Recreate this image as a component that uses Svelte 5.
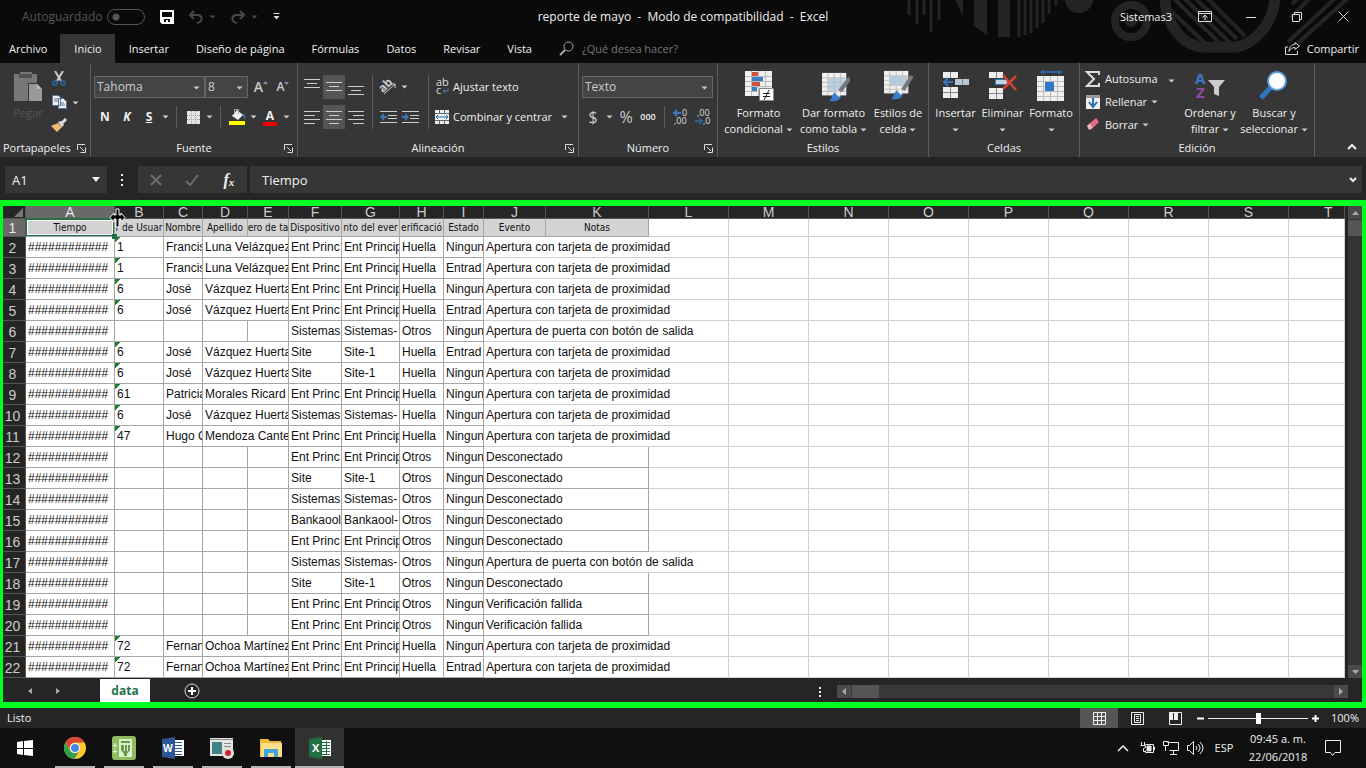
<script lang="ts">
  type Row = {
    user?: string;
    name?: string;
    surname?: string;
    device: string;
    point: string;
    check: string;
    state: string;
    event: string;
  };

  const tabs = ["Archivo", "Inicio", "Insertar", "Diseño de página", "Fórmulas", "Datos", "Revisar", "Vista"];
  const columns = [
    { id: "A", width: 89 },
    { id: "B", width: 49 },
    { id: "C", width: 39 },
    { id: "D", width: 45 },
    { id: "E", width: 41 },
    { id: "F", width: 53 },
    { id: "G", width: 58 },
    { id: "H", width: 44 },
    { id: "I", width: 40 },
    { id: "J", width: 62 },
    { id: "K", width: 103 },
    ...["L", "M", "N", "O", "P", "Q", "R", "S"].map((id) => ({ id, width: 80 })),
  ];
  const titles = [
    "Tiempo",
    "r de Usuar",
    "Nombre",
    "Apellido",
    "ero de ta",
    "Dispositivo",
    "nto del ever",
    "erificació",
    "Estado",
    "Evento",
    "Notas",
  ];

  const CARD = "Apertura con tarjeta de proximidad";
  const EXIT = "Apertura de puerta con botón de salida";
  const OFF = "Desconectado";
  const FAIL = "Verificación fallida";
  const ENT = ["Ent Princ", "Ent Princip"];
  const SIS = ["Sistemas", "Sistemas-"];
  const SITE = ["Site", "Site-1"];
  const BANK = ["Bankaool", "Bankaool-"];

  function person(user: string, name: string, surname: string, place: string[], state: string): Row {
    return { user, name, surname, device: place[0], point: place[1], check: "Huella", state, event: CARD };
  }

  function other(place: string[], event: string): Row {
    return { device: place[0], point: place[1], check: "Otros", state: "Ningun", event };
  }

  const rows: Row[] = [
    person("1", "Francis", "Luna Velázquez", ENT, "Ningun"),
    person("1", "Francis", "Luna Velázquez", ENT, "Entrad"),
    person("6", "José", "Vázquez Huerta", ENT, "Ningun"),
    person("6", "José", "Vázquez Huerta", ENT, "Entrad"),
    other(SIS, EXIT),
    person("6", "José", "Vázquez Huerta", SITE, "Entrad"),
    person("6", "José", "Vázquez Huerta", SITE, "Ningun"),
    person("61", "Patricia", "Morales Ricard", ENT, "Ningun"),
    person("6", "José", "Vázquez Huerta", SIS, "Ningun"),
    person("47", "Hugo C", "Mendoza Cante", ENT, "Ningun"),
    other(ENT, OFF),
    other(SITE, OFF),
    other(SIS, OFF),
    other(BANK, OFF),
    other(ENT, OFF),
    other(SIS, EXIT),
    other(SITE, OFF),
    other(ENT, FAIL),
    other(ENT, FAIL),
    person("72", "Fernan", "Ochoa Martínez", ENT, "Ningun"),
    person("72", "Fernan", "Ochoa Martínez", ENT, "Entrad"),
  ];

  let activeTab = $state("Inicio");
  let formula = $state("Tiempo");
  let zoom = $state(100);
</script>

{#snippet caret()}
  <svg class="caret" width="7" height="4" viewBox="0 0 7 4"><path d="M0.5 0.5h6L3.5 3.5z" fill="currentColor" /></svg>
{/snippet}

{#snippet launcher(label: string)}
  <button class="launcher" aria-label={label}>
    <svg width="9" height="9" viewBox="0 0 9 9" fill="none" stroke="#ddd"><path d="M0.5 6V0.5H8M3 3l4 4M8.5 3.5v5h-5" /></svg>
  </button>
{/snippet}

{#snippet lines(y: number, widths: number[])}
  <svg width="16" height="18" viewBox="0 0 16 18" fill="none" stroke="#ccc">
    {#each widths as w, i}
      <path d={`M${w < 0 ? 16 + w : w === 10 ? 3 : 0} ${y + i * 4}.5h${Math.abs(w)}`} />
    {/each}
  </svg>
{/snippet}

{#snippet grid()}
  <path fill="#f2f0ee" d="M0 1h27v25H0z" />
  <path stroke="#bbb" fill="none" d="M0 6.5h27M0 11.5h27M0 16.5h27M0 21.5h27M6.5 1v25M13.5 1v25M20.5 1v25" />
{/snippet}

<div class="excel">
  <header class="top">
    <svg class="art" width="486" height="62" viewBox="0 0 486 62" fill="none" stroke="#242424">
      <path stroke-width="3" d="M29 0v15M37 0v24M44 0v15M51 0v32M59 0v20" />
      <path fill="#242424" stroke="none" d="M75 0h8v16zM94 0h13v35l-13-9zM118 0h12v37h-12z" />
      <path stroke-width="3" d="M139 0v37M145 0v35M151 0v33M157 0v28M163 0v23M169 0v14M176 0v5" />
      <circle cx="199" cy="-1" r="14" fill="#242424" stroke="none" />
      <circle cx="251" cy="21" r="16" stroke-width="8" />
      <circle cx="251" cy="21" r="6" fill="#242424" stroke="none" />
      <path stroke-width="11" d="M285 -10C283 27 305 47 325 47h32c20-5 42-28 37-60" />
      <path stroke-width="4" d="M292 -3l50 48M303 -3l48 47M314 -3l43 42M325 -4l40 40M288 8l40 38" />
      <path stroke-width="4" d="M412 4l10-10M410 18l26-26M408 42l54-50M418 43l58-52" />
    </svg>
    <div class="title-bar">
      <div class="quick">
        <label class="autosave">Autoguardado <input type="checkbox" disabled /></label>
        <button aria-label="Guardar">
          <svg width="14" height="14" viewBox="0 0 14 14"><path fill="#fff" fill-rule="evenodd" d="M0 0h14v14H2l-2-2zM2 2v5h10V2zM4 9v3h2v-2h2v2h2V9z" /></svg>
        </button>
        <button class="dim" aria-label="Deshacer">
          <svg width="14" height="14" viewBox="0 0 14 14" fill="none" stroke="currentColor" stroke-width="2"><path d="M5 1L1 5l4 4M1 5h8c5 1 5 7-1 8" /></svg>
          {@render caret()}
        </button>
        <button class="dim" aria-label="Rehacer">
          <svg width="14" height="14" viewBox="0 0 14 14" fill="none" stroke="currentColor" stroke-width="2"><path d="M9 1l4 4-4 4M13 5H5c-5 1-5 7 1 8" /></svg>
          {@render caret()}
        </button>
        <button aria-label="Personalizar barra">
          <svg width="7" height="7" viewBox="0 0 7 7" fill="#ddd"><path d="M0.5 0h6v1h-6zM0.5 3h6L3.5 6.5z" /></svg>
        </button>
      </div>
      <div class="doc-title">reporte de mayo&nbsp; -&nbsp; Modo de compatibilidad&nbsp; -&nbsp; Excel</div>
      <div class="window-buttons">
        <span class="account">Sistemas3</span>
        <button aria-label="Opciones de la cinta">
          <svg width="14" height="11" viewBox="0 0 14 11" fill="none" stroke="#ddd"><path d="M0.5 0.5h13v10H0.5zM0.5 2.5h13M7 9V4M4.5 6.5L7 4l2.5 2.5" /></svg>
        </button>
        <button aria-label="Minimizar"><svg width="10" height="10" viewBox="0 0 10 10" stroke="#ddd"><path d="M0 5.5h10" /></svg></button>
        <button aria-label="Restaurar">
          <svg width="10" height="10" viewBox="0 0 10 10" fill="none" stroke="#ddd"><path d="M0.5 2.5h7v7h-7zM2.5 2.5v-2h7v7h-2" /></svg>
        </button>
        <button aria-label="Cerrar"><svg width="11" height="11" viewBox="0 0 11 11" stroke="#ddd"><path d="M0.5 0.5l10 10M10.5 0.5l-10 10" /></svg></button>
      </div>
    </div>
    <nav class="tabs">
      {#each tabs as tab}
        <button class:active={tab === activeTab} onclick={() => (activeTab = tab)}>{tab}</button>
      {/each}
      <label class="tell-me">
        <svg width="15" height="15" viewBox="0 0 15 15" fill="none" stroke="#aaa"><circle cx="9.5" cy="5.5" r="4.5" /><path stroke-width="2" d="M6 9l-5 5" /></svg>
        <input type="text" placeholder="¿Qué desea hacer?" />
      </label>
      <button class="share">
        <svg width="15" height="13" viewBox="0 0 15 13" fill="none" stroke="#ddd"><path d="M3 5H0.5v7.5h12V9M10 0.5L14.5 4 10 7.5v-2C7 5.5 5 7 4 9.5 4 5 6.5 2.5 10 2.5z" /></svg>
        Compartir
      </button>
    </nav>
  </header>

  <div class="ribbon">
    <section class="clipboard">
      <div class="body">
        <button class="big disabled" disabled>
          <svg width="30" height="32" viewBox="0 0 30 32"><path fill="#777" d="M1 4h6V2h12v2h5v9h-9v18H1z" /><path fill="#505050" d="M6 4h13v4H6z" /><path fill="#999" d="M16 14h8l5 5v12H16z" /><path fill="#bbb" d="M24 14v5h5z" /></svg>
          <span>Pegar</span>
        </button>
        <div class="column">
          <button class="icon" aria-label="Cortar">
            <svg width="14" height="16" viewBox="0 0 14 16" fill="none" stroke-width="2"><path stroke="#ccc" d="M3 0l6 10M11 0L5 10" /><g stroke="#2f5e8c"><circle cx="3" cy="12" r="2" /><circle cx="11" cy="12" r="2" /></g></svg>
          </button>
          <button class="icon" aria-label="Copiar">
            <svg width="15" height="14" viewBox="0 0 15 14" stroke="#55789c"><path fill="#eee" d="M0.5 0.5h6l2 2v8h-8zM6.5 3.5h5l3 3v7h-8z" /><path d="M2 4h4M2 6h4M8 8h4M8 10h5" /></svg>
          </button>
          <button class="icon" aria-label="Copiar formato">
            <svg width="16" height="14" viewBox="0 0 16 14"><path fill="#f0bb75" d="M0 8l7-3 4 4-5 5z" /><path fill="#ddd" d="M7 4l4 5 2-2-3-4z" /><path stroke="#ddd" stroke-width="3" d="M11 5l4-4" /></svg>
          </button>
        </div>
        <button class="drop" aria-label="Opciones de copiar">{@render caret()}</button>
      </div>
      <h2>Portapapeles {@render launcher("Portapapeles")}</h2>
    </section>

    <section class="font">
      <div class="body rows">
        <div class="row">
          <div class="select wide"><select aria-label="Fuente"><option>Tahoma</option></select>{@render caret()}</div>
          <div class="select small"><select aria-label="Tamaño"><option>8</option></select>{@render caret()}</div>
          <button class="icon letter" aria-label="Aumentar tamaño">A<svg width="5" height="14" viewBox="0 0 5 14" fill="#6f93b8"><path d="M0 4l2.5-3L5 4z" /></svg></button>
          <button class="icon letter less" aria-label="Disminuir tamaño">A<svg width="5" height="14" viewBox="0 0 5 14" fill="#6f93b8"><path d="M0 2h5L2.5 5z" /></svg></button>
        </div>
        <div class="row">
          <button class="icon mark"><b>N</b></button>
          <button class="icon mark"><b><i>K</i></b></button>
          <button class="icon mark"><b><u>S</u></b></button>
          <button class="drop" aria-label="Subrayado">{@render caret()}</button>
          <span class="sep"></span>
          <button class="icon" aria-label="Bordes">
            <svg width="13" height="13" viewBox="0 0 13 13"><path fill="#e4e4e4" d="M0 0h13v13H0z" /><path stroke="#999" stroke-dasharray="1 1" d="M4.500 0v13M8.500 0v13M0 4.500h13M0 8.500h13" /></svg>
          </button>
          <button class="drop" aria-label="Más bordes">{@render caret()}</button>
          <span class="sep"></span>
          <button class="icon" aria-label="Color de relleno">
            <svg width="17" height="16" viewBox="0 0 17 16"><path fill="#eee" d="M8 1l6 5-5 5-6-4z" /><path stroke="#aaa" fill="none" d="M5.5 5V0.5h4V5" /><path fill="#3d78bd" d="M13 4c3 1 4 4 3 6l-2-3z" /><path fill="#ff0" d="M0 12h16v4H0z" /></svg>
          </button>
          <button class="drop" aria-label="Más rellenos">{@render caret()}</button>
          <button class="icon color" aria-label="Color de fuente"><b>A</b></button>
          <button class="drop" aria-label="Más colores">{@render caret()}</button>
        </div>
      </div>
      <h2>Fuente {@render launcher("Fuente")}</h2>
    </section>

    <section class="align">
      <div class="body">
        <div class="rows">
          <div class="row">
            <button class="icon" aria-label="Alinear arriba">{@render lines(1, [16, 10, 16])}</button>
            <button class="icon on" aria-label="Alinear al medio">{@render lines(4, [16, 10, 16])}</button>
            <button class="icon" aria-label="Alinear abajo">{@render lines(8, [16, 10, 16])}</button>
          </div>
          <div class="row">
            <button class="icon" aria-label="Izquierda">{@render lines(3, [16, 11, 16, 11])}</button>
            <button class="icon on" aria-label="Centrar">{@render lines(3, [16, 10, 16, 10])}</button>
            <button class="icon" aria-label="Derecha">{@render lines(3, [16, -11, 16, -11])}</button>
          </div>
        </div>
        <span class="sep tall"></span>
        <div class="rows second">
          <div class="row">
            <button class="icon" aria-label="Orientación">
              <svg width="18" height="16" viewBox="0 0 18 16"><text x="0" y="11" font-size="12" font-weight="bold" fill="#ccc" transform="rotate(-45 6 8)">ab</text><path stroke="#ccc" fill="none" d="M5 15L16 5M12 5h4v4" /></svg>
            </button>
            <button class="drop" aria-label="Más orientaciones">{@render caret()}</button>
          </div>
          <div class="row">
            <button class="icon" aria-label="Disminuir sangría">
              <svg width="17" height="14" viewBox="0 0 17 14"><path stroke="#ccc" d="M0 1.5h17M8 5.5h9M8 8.5h9M0 12.5h17" /><path fill="#3c78b4" d="M0 7l4-4v3h3v2H4v3z" /></svg>
            </button>
            <button class="icon" aria-label="Aumentar sangría">
              <svg width="17" height="14" viewBox="0 0 17 14"><path stroke="#ccc" d="M0 1.5h17M8 5.5h9M8 8.5h9M0 12.5h17" /><path fill="#3c78b4" d="M7 7L3 3v3H0v2h3v3z" /></svg>
            </button>
          </div>
        </div>
        <span class="sep tall"></span>
        <div class="rows">
          <div class="row">
            <button class="text">
              <svg width="14" height="18" viewBox="0 0 14 18" fill="#ddd" font-size="11"><text x="1" y="8">ab</text><text x="1" y="16">c</text><path fill="none" stroke="#4a7dac" d="M13 10v3H8M10 11l-2 2 2 2" /></svg>
              Ajustar texto
            </button>
          </div>
          <div class="row">
            <button class="text">
              <svg width="14" height="14" viewBox="0 0 14 14"><path fill="#eaf0f6" d="M0 0h14v14H0z" /><path stroke="#666" d="M0 3.5h14M0 10.5h14M4.5 0v3M9.5 0v3M4.5 11v3M9.5 11v3" /><path stroke="#2e6da8" fill="none" d="M1 7h12M3 5L1 7l2 2M11 5l2 2-2 2" /></svg>
              Combinar y centrar
            </button>
            <button class="drop after" aria-label="Más combinaciones">{@render caret()}</button>
          </div>
        </div>
      </div>
      <h2>Alineación {@render launcher("Alineación")}</h2>
    </section>

    <section class="number">
      <div class="body rows">
        <div class="row">
          <div class="select full"><select aria-label="Formato de número"><option>Texto</option></select>{@render caret()}</div>
        </div>
        <div class="row">
          <button class="icon sign">$</button>
          <button class="drop" aria-label="Más monedas">{@render caret()}</button>
          <button class="icon sign">%</button>
          <button class="icon zeros">000</button>
          <span class="sep"></span>
          <button class="icon" aria-label="Aumentar decimales">
            <svg width="16" height="16" viewBox="0 0 16 16" fill="#ddd" font-size="9"><text x="9" y="7">0</text><text x="1" y="15">,00</text><path stroke="#3c78b4" stroke-width="2" fill="none" d="M8 4H1M4 1L1 4l3 3" /></svg>
          </button>
          <button class="icon" aria-label="Disminuir decimales">
            <svg width="16" height="16" viewBox="0 0 16 16" fill="#ddd" font-size="9"><text x="2" y="7">,00</text><text x="8" y="15">,0</text><path stroke="#2d5f8f" stroke-width="2" fill="none" d="M0 12h7M4 9l3 3-3 3" /></svg>
          </button>
        </div>
      </div>
      <h2>Número {@render launcher("Número")}</h2>
    </section>

    <section class="styles">
      <div class="body">
        <button class="big w74">
          <svg width="32" height="32" viewBox="0 0 32 32"><g transform="translate(2 0)">{@render grid()}</g><path fill="#d2513a" d="M9 2h6v4H9zM9 12h8v4H9z" /><path fill="#3a7ec2" d="M9 7h11v4H9zM9 17h5v4H9z" /><path fill="#fff" stroke="#888" d="M16.5 18.5h14v12h-14z" /><path stroke="#222" d="M20 23.5h7M20 26.5h7M26 20l-5 10" /></svg>
          <span>Formato<br />condicional {@render caret()}</span>
        </button>
        <button class="big w74">
          <svg width="32" height="32" viewBox="0 0 32 32"><g transform="translate(4 2) scale(0.9)">{@render grid()}</g><path fill="#a9c3d8" d="M10 8h17v14H10z" opacity="0.7" /><path stroke="#777" stroke-width="4" d="M32 8L22 21" /><path fill="#3b7ccb" d="M11 31c3-1 2-7 7-9l5 4c-1 5-7 6-12 5z" /><path fill="#eee" d="M17 23l3-2 3 3-2 3z" /></svg>
          <span>Dar formato<br />como tabla {@render caret()}</span>
        </button>
        <button class="big w52">
          <svg width="32" height="32" viewBox="0 0 32 32"><g transform="translate(2 0) scale(0.9)">{@render grid()}</g><path fill="#b5cbdc" d="M8 6h17v10H8z" /><path stroke="#777" stroke-width="4" d="M30 6L21 20" /><path fill="#3b7ccb" d="M9 29c3-1 2-7 7-9l5 4c-1 5-7 6-12 5z" /><path fill="#eee" d="M15 21l3-2 3 3-2 3z" /></svg>
          <span>Estilos de<br />celda {@render caret()}</span>
        </button>
      </div>
      <h2>Estilos</h2>
    </section>

    <section class="cells">
      <div class="body">
        <button class="big w46">
          <svg width="28" height="32" viewBox="0 0 28 32"><path fill="#eee" d="M1 2h15v6H1zM1 17h15v11H1z" /><path fill="#b9c8d6" d="M13 9h14v6H13z" /><path stroke="#888" fill="none" d="M8.5 2v6M1 22.5h15M8.5 17v11M20.5 9v6" /><path stroke="#3577b8" stroke-width="2" fill="none" d="M11 12H2M6 8l-4 4 4 4" /></svg>
          <span>Insertar<br />{@render caret()}</span>
        </button>
        <button class="big w46">
          <svg width="30" height="32" viewBox="0 0 30 32"><path fill="#eee" d="M1 2h14v6H1zM1 18h14v11H1z" /><path fill="#c5d3df" stroke="#3577b8" d="M7.5 9.5h12v5h-12z" /><path stroke="#888" fill="none" d="M8.5 2v6M1 23.5h14M8.5 18v11" /><path stroke="#d1452d" stroke-width="2.5" d="M15 5l13 15M28 6L15 19" /></svg>
          <span>Eliminar<br />{@render caret()}</span>
        </button>
        <button class="big w50">
          <svg width="28" height="32" viewBox="0 0 28 32"><g transform="translate(0 5)">{@render grid()}</g><path fill="#2c7ac7" d="M8 12h9v9H8z" /><path stroke="#2f6296" fill="none" stroke-width="2" d="M4 2h20M7 0L4 2l3 2M21 0l3 2-3 2" /></svg>
          <span>Formato<br />{@render caret()}</span>
        </button>
      </div>
      <h2>Celdas</h2>
    </section>

    <section class="edit">
      <div class="body">
        <div class="column labels">
          <button class="text">
            <svg width="16" height="16" viewBox="0 0 16 16" fill="none" stroke="#ddd" stroke-width="2"><path d="M14 4V1H2l7 7-7 7h12v-3" /></svg>
            Autosuma <span class="far">{@render caret()}</span>
          </button>
          <button class="text">
            <svg width="16" height="14" viewBox="0 0 16 14"><path fill="#eee" d="M1 0h14v14H1z" /><path fill="#999" d="M1 0h14v3H1z" /><path stroke="#2e6da8" stroke-width="2" fill="none" d="M8 3v9M4 7l4 5 4-5" /></svg>
            Rellenar {@render caret()}
          </button>
          <button class="text">
            <svg width="16" height="14" viewBox="0 0 16 14"><path fill="#e46a83" d="M5 5l6-5 3 4-6 6z" /><path fill="#f3b4c1" d="M5 5l3 5-4 2-2-4z" /></svg>
            Borrar {@render caret()}
          </button>
        </div>
        <button class="big w60">
          <svg width="30" height="32" viewBox="0 0 30 32"><g font-size="15" font-weight="bold"><text x="0" y="14" fill="#3c78c8">A</text><text x="1" y="28" fill="#8e4ba8">Z</text></g><path fill="#ccc" d="M13 10h17l-6 7v9l-5-2v-7z" /></svg>
          <span>Ordenar y<br />filtrar {@render caret()}</span>
        </button>
        <button class="big w68">
          <svg width="30" height="32" viewBox="0 0 30 32"><path stroke="#2f74c0" stroke-width="5" d="M11 18L2 28" /><circle cx="18" cy="11" r="9" fill="#fff" stroke="#5c9bd8" stroke-width="2" /></svg>
          <span>Buscar y<br />seleccionar {@render caret()}</span>
        </button>
      </div>
      <h2>Edición</h2>
    </section>
    <button class="collapse" aria-label="Contraer la cinta">
      <svg width="10" height="6" viewBox="0 0 10 6" fill="none" stroke="#eee" stroke-width="2"><path d="M1 5l4-4 4 4" /></svg>
    </button>
  </div>

  <div class="formula-bar">
    <div class="name-box">
      <input type="text" aria-label="Cuadro de nombres" value="A1" />
      <svg width="8" height="5" viewBox="0 0 8 5" fill="#eee"><path d="M0 0h8L4 5z" /></svg>
    </div>
    <svg class="dots" width="3" height="12" viewBox="0 0 3 12" fill="#eee"><path d="M0 0h2v2H0zM0 5h2v2H0zM0 10h2v2H0z" /></svg>
    <div class="formula-buttons">
      <button aria-label="Cancelar"><svg width="12" height="12" viewBox="0 0 12 12" stroke="#6e6e6e" stroke-width="2"><path d="M1 1l10 10M11 1L1 11" /></svg></button>
      <button aria-label="Introducir"><svg width="14" height="12" viewBox="0 0 14 12" fill="none" stroke="#6e6e6e" stroke-width="2"><path d="M1 7l4 4 8-10" /></svg></button>
      <button class="fx">f<small>x</small></button>
    </div>
    <div class="formula">
      <input type="text" aria-label="Barra de fórmulas" bind:value={formula} />
      <svg width="8" height="6" viewBox="0 0 8 6" fill="none" stroke="#eee" stroke-width="2"><path d="M1 1l3 3 3-3" /></svg>
    </div>
  </div>

  <main class="sheet-frame">
    <div class="sheet">
      <table>
        <colgroup>
          <col style:width="23px" />
          {#each columns as column}
            <col style:width={`${column.width}px`} />
          {/each}
          <col />
        </colgroup>
        <thead>
          <tr>
            <th class="corner"><svg width="9" height="9" viewBox="0 0 9 9"><path fill="#777" d="M9 0v9H0z" /></svg></th>
            {#each columns as column}
              <th class:selected={column.id === "A"}>{column.id}</th>
            {/each}
            <th class="last">T</th>
          </tr>
        </thead>
        <tbody>
          <tr class="titles">
            <th class="selected">1</th>
            {#each titles as title, i}
              <td class:active-cell={i === 0}><span>{title}</span></td>
            {/each}
            {#each { length: 9 } as _}
              <td class="free"></td>
            {/each}
          </tr>
          {#each rows as row, i}
            <tr>
              <th>{i + 2}</th>
              <td>############</td>
              <td class:flag={row.user}>{row.user ?? ""}</td>
              <td>{row.name ?? ""}</td>
              {#if row.surname}
                <td colspan="2">{row.surname}</td>
              {:else}
                <td></td>
                <td></td>
              {/if}
              <td>{row.device}</td>
              <td>{row.point}</td>
              <td>{row.check}</td>
              <td>{row.state}</td>
              {#if row.event.startsWith("Apertura")}
                <td colspan="3" class="spill">{row.event}</td>
              {:else}
                <td colspan="2">{row.event}</td>
                <td class="free"></td>
              {/if}
              {#each { length: 8 } as _}
                <td class="free"></td>
              {/each}
            </tr>
          {/each}
        </tbody>
      </table>
      <div class="v-scroll">
        <button aria-label="Subir"><svg width="7" height="4" viewBox="0 0 7 4" fill="#aaa"><path d="M0 4h7L3.5 0z" /></svg></button>
        <span class="thumb"></span>
        <button aria-label="Bajar"><svg width="7" height="4" viewBox="0 0 7 4" fill="#aaa"><path d="M0 0h7L3.5 4z" /></svg></button>
      </div>
      <span class="fill-handle"></span>
      <svg class="pointer" width="17" height="20" viewBox="0 0 17 20"><path fill="#000" stroke="#fff" d="M7 1h3v6h2V5l4 4.5-4 4.5v-3h-2v8H7v-8H5v3L1 9.5 5 5v2h2z" /></svg>
    </div>
    <div class="sheet-tabs">
      <button class="arrow" aria-label="Hoja anterior"><svg width="4" height="6" viewBox="0 0 4 6" fill="#aaa"><path d="M4 0v6L0 3z" /></svg></button>
      <button class="arrow" aria-label="Hoja siguiente"><svg width="4" height="6" viewBox="0 0 4 6" fill="#aaa"><path d="M0 0v6l4-3z" /></svg></button>
      <button class="sheet-tab">data</button>
      <button class="add" aria-label="Hoja nueva"><svg width="16" height="16" viewBox="0 0 16 16" fill="none" stroke="#ddd"><circle cx="8" cy="8" r="7" /><path stroke="#fff" stroke-width="2" d="M8 4v8M4 8h8" /></svg></button>
      <svg class="dots" width="3" height="12" viewBox="0 0 3 12" fill="#eee"><path d="M0 1h2v2H0zM0 5h2v2H0zM0 9h2v2H0z" /></svg>
      <div class="h-scroll">
        <button aria-label="Izquierda"><svg width="4" height="7" viewBox="0 0 4 7" fill="#aaa"><path d="M4 0v7L0 3.5z" /></svg></button>
        <span class="thumb"></span>
        <button aria-label="Derecha"><svg width="4" height="7" viewBox="0 0 4 7" fill="#aaa"><path d="M0 0v7l4-3.5z" /></svg></button>
      </div>
    </div>
  </main>

  <footer class="status">
    <span class="ready">Listo</span>
    <button class="view on" aria-label="Normal"><svg width="13" height="13" viewBox="0 0 13 13" fill="none" stroke="#eee"><path d="M0.5 0.5h12v12h-12zM4.5 0v13M8.5 0v13M0 4.5h13M0 8.5h13" /></svg></button>
    <button class="view" aria-label="Diseño de página"><svg width="13" height="13" viewBox="0 0 13 13" fill="none" stroke="#eee"><path d="M0.5 0.5h12v12h-12zM3.5 2.5h6v8h-6zM5 4.5h3M5 6.5h3M5 8.5h3" /></svg></button>
    <button class="view" aria-label="Saltos de página"><svg width="13" height="13" viewBox="0 0 13 13"><path fill="none" stroke="#eee" d="M0.5 0.5h12v12h-12z" /><path fill="#eee" d="M0 0h4v8H0zM5 0h4v8H5z" /></svg></button>
    <button class="step" aria-label="Alejar"><svg width="7" height="7" viewBox="0 0 7 7" stroke="#fff" stroke-width="2"><path d="M0 3.5h7" /></svg></button>
    <input type="range" min="0" max="200" aria-label="Zoom" bind:value={zoom} />
    <button class="step" aria-label="Acercar"><svg width="7" height="7" viewBox="0 0 7 7" stroke="#fff" stroke-width="2"><path d="M0 3.5h7M3.5 0v7" /></svg></button>
    <span class="percent">{zoom}%</span>
  </footer>

  <div class="taskbar">
    <button class="start" aria-label="Inicio">
      <svg width="16" height="16" viewBox="0 0 16 16" fill="#fff"><path d="M0 2l6-1v7H0zM7 1l9-1v8H7zM0 9h6v6l-6-1zM7 9h9v7l-9-1z" /></svg>
    </button>
    <button class="app" aria-label="Chrome">
      <svg width="22" height="22" viewBox="0 0 22 22"><circle cx="11" cy="11" r="11" fill="#fbc92e" /><path fill="#df4534" d="M1.5 5.5A11 11 0 0 1 20.5 5.5H11a5.5 5.5 0 0 0-5 7.5z" /><path fill="#2f9e50" d="M1.5 5.5A11 11 0 0 0 10.5 22l5-8.5a5.5 5.5 0 0 1-9.5 0z" /><circle cx="11" cy="11" r="5" fill="#fff" /><circle cx="11" cy="11" r="4" fill="#4688ef" /></svg>
    </button>
    <button class="app" aria-label="Control de acceso">
      <svg width="24" height="24" viewBox="0 0 24 24"><rect width="24" height="24" rx="3" fill="#8cbb62" /><path fill="#dfeecd" d="M7 3h13v18H7z" /><path fill="#6a9a45" d="M9 5h9v2H9zM9 9h9v5l-3 4v2h-3v-2l-3-4z" /><path fill="#dfeecd" d="M12 9h1v6h-1zM15 9h1v6h-1z" /><path stroke="#e8f3db" d="M1 9.5h4M3 7v5M1 15.5h4M3 13v5" /></svg>
    </button>
    <button class="app" aria-label="Word">
      <svg width="22" height="22" viewBox="0 0 22 22"><path fill="#fff" d="M12 3h10v16H12z" /><path stroke="#2b5797" d="M13 5.5h7M13 8.5h7M13 11.5h7M13 14.5h7M13 17.5h7" /><path fill="#2b5797" d="M0 2l13-2v22L0 20z" /><text x="1" y="15" font-size="10" font-weight="bold" fill="#fff">W</text></svg>
    </button>
    <button class="app" aria-label="Grabador">
      <svg width="24" height="22" viewBox="0 0 24 22"><path fill="#e5e5e5" d="M0 1h23v18H0z" /><path fill="#3f8287" d="M2 5h10v12H2z" /><path stroke="#888" d="M0 2.5h23M14 6.5h7M14 9.5h7M14 12.5h4" /><circle cx="18" cy="16" r="6" fill="#ddd" /><circle cx="18" cy="16" r="3" fill="#d31f2a" /></svg>
    </button>
    <button class="app" aria-label="Explorador">
      <svg width="22" height="20" viewBox="0 0 22 20"><path fill="#eeb73e" d="M0 1h8l2 2h11v16H0z" /><path fill="#fbdf88" d="M1 5h21v14H1z" /><path fill="#3fa5dc" d="M4 11h14v8h-4v-4H8v4H4z" /></svg>
    </button>
    <button class="app current" aria-label="Excel">
      <svg width="22" height="22" viewBox="0 0 22 22"><path fill="#fff" d="M12 3h10v16H12z" /><path stroke="#1f7145" d="M13 5.5h8M13 8.5h8M13 11.5h8M13 14.5h8M13 17.5h8M17.5 4v14" /><path fill="#1f7145" d="M0 2l13-2v22L0 20z" /><text x="3" y="15" font-size="11" font-weight="bold" fill="#fff">X</text></svg>
    </button>
    <div class="tray">
      <button aria-label="Mostrar iconos"><svg width="12" height="8" viewBox="0 0 12 8" fill="none" stroke="#eee" stroke-width="1.5"><path d="M1 7l5-5 5 5" /></svg></button>
      <button aria-label="Batería"><svg width="15" height="12" viewBox="0 0 15 12" fill="none" stroke="#eee"><path d="M5.5 2.5h8v8h-8v-2M13.5 5h1v3M1.5 0v3M4.5 0v3M0.5 3.5h5v2l-2 1v3h2" /><path fill="#eee" d="M7 4h4v5H7z" /></svg></button>
      <button aria-label="Red"><svg width="16" height="14" viewBox="0 0 16 14" fill="none" stroke="#eee"><path d="M4.5 1.5h11v8h-9M10.5 10v3M7 13.5h7M0.5 0.5h5v4h-5zM2.5 5v5" /></svg></button>
      <button aria-label="Volumen"><svg width="17" height="14" viewBox="0 0 17 14" fill="none" stroke="#eee"><path d="M0.5 4.5h2l4-4v13l-4-4h-2zM9 5q2 2 0 4M11 3q4 4 0 8M13 1q6 6 0 12" /></svg></button>
      <button class="lang">ESP</button>
      <time datetime="2018-06-22T09:45">09:45 a. m.<br />22/06/2018</time>
      <button class="notes" aria-label="Notificaciones"><svg width="16" height="17" viewBox="0 0 16 17" fill="none" stroke="#eee"><path d="M0.5 0.5h15v12H10l-2.5 3-2-3h-5z" /></svg></button>
    </div>
  </div>
</div>

<style>
  :global(body) {
    margin: 0;
    background: #111;
  }

  .excel {
    font: 12px/16px "Open Sans", "Noto Sans", sans-serif;
    color: #f0f0f0;
    background: #252525;
  }

  button,
  input,
  select {
    font: inherit;
    color: inherit;
    background: none;
    border: 0;
    padding: 0;
    margin: 0;
    outline: none;
  }

  button {
    display: flex;
    align-items: center;
    justify-content: center;
    white-space: nowrap;
  }

  svg {
    flex: none;
  }

  .caret {
    color: #ccc;
  }

  /* title bar and tabs */
  .top {
    position: relative;
    background: #0a0a0a;
  }

  .art {
    position: absolute;
    top: 0;
    right: 0;
  }

  .title-bar {
    position: relative;
    display: grid;
    grid-template-columns: 1fr auto 1fr;
    align-items: center;
    height: 34px;
    padding-bottom: 1px;
    box-sizing: border-box;
  }

  .quick {
    display: flex;
    align-items: center;
    gap: 15px;
    padding-left: 22px;
  }

  .quick button {
    gap: 6px;
  }

  .autosave {
    display: flex;
    align-items: center;
    gap: 5px;
    color: #555;
  }

  .autosave input {
    appearance: none;
    width: 38px;
    height: 16px;
    border: 1px solid #555;
    border-radius: 8px;
    background: radial-gradient(circle at 8px 7px, #555 3px, transparent 4px);
  }

  .dim,
  .dim .caret {
    color: #484848;
  }

  .window-buttons {
    display: flex;
    justify-content: flex-end;
    align-items: center;
    font-size: 11px;
  }

  .window-buttons button {
    width: 46px;
    height: 30px;
  }

  .account {
    padding-right: 10px;
  }

  .tabs {
    position: relative;
    display: flex;
    height: 29px;
    font-size: 11px;
  }

  .tabs > button {
    padding: 0 13px 0 14px;
  }

  .tabs > button:first-child {
    padding: 0 13px 0 9px;
  }

  .tabs > .active {
    background: #363636;
  }

  .tell-me {
    display: flex;
    align-items: center;
    gap: 8px;
    padding-left: 14px;
  }

  .tell-me input::placeholder {
    color: #777;
    opacity: 1;
  }

  .tabs > .share {
    margin-left: auto;
    padding: 0 7px;
    gap: 7px;
  }

  /* ribbon */
  .ribbon {
    display: flex;
    background: #363636;
    height: 94px;
    font-size: 11px;
  }

  section {
    display: flex;
    flex-direction: column;
    flex: none;
    box-sizing: border-box;
    padding: 4px 3px 0;
    border-right: 1px solid #5c5c5c;
  }

  .clipboard {
    width: 91px;
  }
  .font {
    width: 207px;
  }
  .align {
    width: 281px;
  }
  .number {
    width: 139px;
  }
  .styles {
    width: 211px;
  }
  .cells {
    width: 151px;
  }
  .edit {
    width: 235px;
  }

  h2 {
    display: flex;
    justify-content: center;
    position: relative;
    margin: 0;
    font-size: 11px;
    font-weight: 400;
    line-height: 19px;
  }

  .clipboard h2 {
    justify-content: flex-start;
  }

  .launcher {
    position: absolute;
    right: 1px;
    top: 6px;
  }

  .body {
    display: flex;
    flex: none;
    height: 71px;
  }

  .rows {
    display: flex;
    flex-direction: column;
    flex: none;
    box-sizing: border-box;
    padding-top: 5px;
  }

  .row {
    display: flex;
    align-items: center;
    height: 30px;
  }

  .rows.second {
    width: 46px;
  }

  .column {
    display: flex;
    flex-direction: column;
  }

  .column button {
    height: 23px;
  }

  .clipboard .body {
    padding-left: 9px;
  }

  .clipboard .column {
    padding-left: 4px;
  }

  .clipboard .drop {
    align-self: center;
  }

  .icon {
    width: 22px;
    height: 24px;
  }

  .mark {
    font-size: 12px;
  }

  .on {
    background: #555;
  }

  .drop {
    width: 11px;
    height: 24px;
  }

  .after {
    margin-left: 7px;
  }

  .sep {
    width: 1px;
    height: 22px;
    margin: 0 5px;
    background: #5c5c5c;
  }

  .tall {
    height: 54px;
    margin: 8px 4px 0 5px;
  }

  .letter {
    font-size: 14px;
    font-weight: 600;
    color: #ccc;
    margin-left: 2px;
  }

  .less {
    font-size: 12px;
    margin: 0;
  }

  .color b {
    border-bottom: 4px solid #e00;
    font-size: 12px;
    line-height: 13px;
    padding: 0 3px;
  }

  .sign {
    font-size: 16px;
    color: #ccc;
  }

  .zeros {
    font-size: 9px;
    font-weight: 600;
  }

  .text {
    gap: 4px;
    padding-left: 2px;
    height: 24px;
  }

  .far {
    padding-left: 6px;
    line-height: 12px;
  }

  .labels {
    width: 98px;
    align-items: flex-start;
  }

  .big {
    flex-direction: column;
    justify-content: flex-start;
    gap: 3px;
    padding-top: 3px;
    width: 32px;
  }

  .big .caret {
    vertical-align: middle;
  }

  .disabled {
    color: #555;
  }

  .w46 {
    width: 47px;
  }
  .w50 {
    width: 50px;
  }
  .w52 {
    width: 54px;
  }
  .w60 {
    width: 58px;
  }
  .w68 {
    width: 70px;
  }
  .w74 {
    width: 75px;
  }

  .select {
    position: relative;
    height: 22px;
    box-sizing: border-box;
    border: 1px solid #666;
    background: #444;
    font-size: 12px;
  }

  .select select {
    appearance: none;
    display: block;
    width: 100%;
    height: 20px;
    padding-left: 2px;
    color: #ccc;
  }

  .select .caret {
    position: absolute;
    right: 4px;
    top: 9px;
    pointer-events: none;
  }

  .wide {
    width: 111px;
  }
  .small {
    width: 43px;
  }
  .full {
    width: 131px;
  }

  .collapse {
    margin-left: auto;
    padding: 0 9px 7px;
    align-items: flex-end;
  }

  /* formula bar */
  .formula-bar {
    display: flex;
    align-items: center;
    gap: 3px;
    padding: 9px 4px 7px 5px;
    font-size: 13px;
  }

  .name-box,
  .formula-buttons,
  .formula {
    display: flex;
    align-items: center;
    height: 27px;
    box-sizing: border-box;
    background: #363636;
  }

  .name-box {
    width: 102px;
    padding: 0 7px;
  }

  .name-box input {
    flex: 1;
    min-width: 0;
  }

  .formula-bar .dots {
    margin: 0 11px;
  }

  .formula-buttons {
    width: 109px;
  }

  .formula-buttons button {
    flex: 1;
  }

  .fx {
    font: italic bold 16px/20px "Liberation Serif", serif;
  }

  .fx small {
    font-size: 11px;
    padding-top: 4px;
  }

  .formula {
    flex: 1;
    padding: 0 5px 0 12px;
  }

  .formula input {
    flex: 1;
  }

  /* sheet */
  .sheet-frame {
    border: solid #00ff21;
    border-width: 6px 4px 6px 3px;
  }

  .sheet {
    position: relative;
    display: flex;
    gap: 3px;
  }

  table {
    flex: 1;
    width: 0;
    table-layout: fixed;
    border-collapse: separate;
    border-spacing: 0;
    background: #fff;
    color: #111;
    font: 12px/18px "Liberation Sans", Arial, sans-serif;
  }

  th,
  td {
    box-sizing: border-box;
    height: 21px;
    padding: 0 0 0 2px;
    overflow: hidden;
    white-space: nowrap;
    text-align: left;
    border: solid #a6a6a6;
    border-width: 0 1px 1px 0;
  }

  th {
    font-size: 14px;
    font-weight: 400;
    text-align: center;
    color: #ccc;
    background: #252525;
    border-color: #555;
    padding: 2px 3px 0 0;
    line-height: 16px;
  }

  thead th {
    height: 13px;
    line-height: 11px;
    padding: 0;
  }

  th.selected {
    background: #6b6868;
    color: #e8e8e8;
  }

  thead th.selected {
    border-bottom-color: #217346;
  }

  .corner {
    text-align: right;
    padding-right: 2px;
  }

  .corner svg {
    display: block;
    margin-left: auto;
  }

  th.last {
    text-align: left;
    padding-left: 35px;
  }

  .titles th,
  .titles td {
    height: 18px;
    line-height: 16px;
    padding-top: 0;
  }

  .titles td:not(.free) {
    background: #d3d3d3;
    font: 10px/16px "DejaVu Sans Condensed", "Open Sans", sans-serif;
    padding: 0;
  }

  .titles span {
    display: flex;
    justify-content: center;
  }

  .titles .active-cell {
    box-shadow:
      inset 0 0 0 1px #217346,
      inset 0 0 0 2px #fff;
  }

  .free,
  .spill {
    border-color: #d0d0d0;
  }

  .flag {
    background: linear-gradient(135deg, #1d8030 4px, transparent 4px);
  }

  .fill-handle {
    position: absolute;
    left: 109px;
    top: 28px;
    width: 5px;
    height: 5px;
    background: #217346;
  }

  .pointer {
    position: absolute;
    left: 106px;
    top: 2px;
  }

  .v-scroll {
    display: flex;
    flex-direction: column;
    width: 14px;
    background: #333;
  }

  .v-scroll button,
  .h-scroll button {
    width: 14px;
    height: 13px;
    background: #4a4a4a;
  }

  .v-scroll .thumb {
    height: 16px;
    margin: 1px 0 auto;
    background: #555;
  }

  .sheet-tabs {
    display: flex;
    align-items: center;
    height: 24px;
    padding-top: 1px;
    box-sizing: border-box;
  }

  .arrow {
    width: 28px;
    height: 23px;
  }

  .arrow:first-child {
    margin-left: 13px;
  }

  .sheet-tab {
    width: 50px;
    height: 23px;
    margin-left: 28px;
    color: #217346;
    background: #fff;
    font-weight: 700;
  }

  .add {
    margin-left: 34px;
  }

  .sheet-tabs .dots {
    margin: 2px 15px 0 auto;
  }

  .h-scroll {
    display: flex;
    width: 37.6%;
    margin: 2px 14px 0 0;
    background: #383838;
  }

  .h-scroll .thumb {
    width: 27px;
    margin: 0 auto 0 1px;
    background: #555;
  }

  /* status bar */
  .status {
    display: flex;
    align-items: center;
    height: 20px;
    padding: 0 7px;
    font-size: 11px;
  }

  .ready {
    margin-right: auto;
  }

  .view {
    width: 38px;
    height: 20px;
  }

  .step {
    width: 13px;
  }

  .status input {
    appearance: none;
    width: 100px;
    height: 12px;
    margin: 0 1px;
    background: linear-gradient(#eee, #eee) center / 100% 1px no-repeat;
  }

  .status input::-webkit-slider-thumb {
    appearance: none;
    width: 5px;
    height: 11px;
    background: #fff;
  }

  .percent {
    width: 37px;
    text-align: right;
  }

  /* taskbar */
  .taskbar {
    display: flex;
    height: 40px;
    background: #101010;
  }

  .start {
    width: 50px;
  }

  .app {
    position: relative;
    width: 49px;
  }

  .app::after {
    content: "";
    position: absolute;
    left: 5px;
    right: 4px;
    bottom: 0;
    height: 2px;
    background: #b5b5b5;
  }

  .current {
    background: #323232;
  }

  .current::after {
    left: 0;
    right: 0;
  }

  .tray {
    display: flex;
    align-items: center;
    margin-left: auto;
    padding-right: 15px;
  }

  .tray button {
    width: 24px;
    height: 40px;
  }

  .tray .lang {
    width: 34px;
    font-size: 11px;
  }

  .tray time {
    width: 74px;
    font-size: 11px;
    line-height: 18px;
    text-align: center;
  }

  .tray .notes {
    width: 36px;
  }
</style>
